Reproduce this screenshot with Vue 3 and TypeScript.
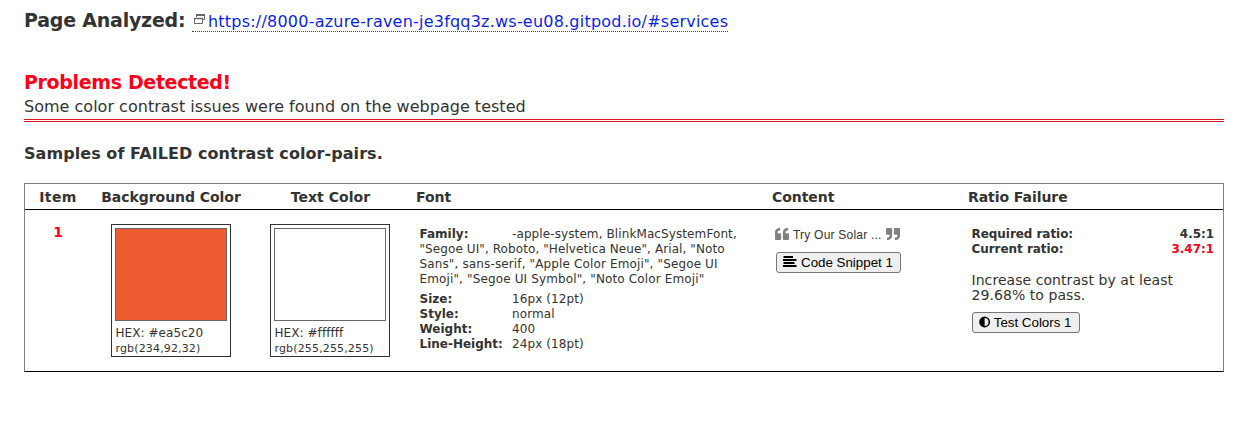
<script setup lang="ts">
interface Swatch { label: string; hex: string; rgb: string }
const swatches: Swatch[] = [
  { label: 'Background', hex: '#ea5c20', rgb: 'rgb(234,92,32)' },
  { label: 'Text', hex: '#ffffff', rgb: 'rgb(255,255,255)' },
]
const shown: Record<string, string> = { '#ea5c20': '#ed5c30', '#ffffff': '#ffffff' }
const family: string[] = [
  '"Segoe UI", Roboto, "Helvetica Neue", Arial, "Noto',
  'Sans", sans-serif, "Apple Color Emoji", "Segoe UI',
  'Emoji", "Segoe UI Symbol", "Noto Color Emoji"',
]
const props: [string, string][] = [
  ['Size:', '16px (12pt)'],
  ['Style:', 'normal'],
  ['Weight:', '400'],
  ['Line-Height:', '24px (18pt)'],
]
</script>

<template>
  <main class="page">
    <div class="analyzed">
      <span class="label">Page Analyzed:</span>
      <a class="link">
        <svg class="win" width="12" height="11" viewBox="0 0 12 11" fill="none" stroke="#666">
          <path d="M2.5 3V.5h8v5H9" /><path d="M2 1h9" stroke-width="2" />
          <path d="M.5 4.5h8v5h-8z" /><path d="M0 4.500h9" stroke-width="1.500" />
        </svg><span class="url">https://8000-azure-raven-je3fqq3z.ws-eu08.gitpod.io/#services</span>
      </a>
    </div>
    <h1>Problems Detected!</h1>
    <p class="sub">Some color contrast issues were found on the webpage tested</p>
    <h2>Samples of FAILED contrast color-pairs.</h2>
    <section class="table">
      <div class="row head">
        <div class="c1">Item</div>
        <div class="c2">Background Color</div>
        <div class="c3">Text Color</div>
        <div class="c4">Font</div>
        <div class="c5">Content</div>
        <div class="c6">Ratio Failure</div>
      </div>
      <div class="row body">
        <div class="c1 num">1</div>
        <div v-for="(s, i) in swatches" :key="s.hex" :class="i ? 'c3' : 'c2'">
          <div class="swatch">
            <div class="fill" :style="{ background: shown[s.hex] }"></div>
            <div class="hex">HEX: {{ s.hex }}</div>
            <div class="rgb">{{ s.rgb }}</div>
          </div>
        </div>
        <div class="c4 font">
          <div class="prop"><b>Family:</b><span>-apple-system, BlinkMacSystemFont,</span></div>
          <div v-for="(line, i) in family" :key="i" :class="'fam f' + i">{{ line }}</div>
          <div class="props">
            <div v-for="p in props" :key="p[0]" class="prop"><b>{{ p[0] }}</b><span>{{ p[1] }}</span></div>
          </div>
        </div>
        <div class="c5 content">
          <div class="quote">
            <svg width="14" height="12" viewBox="0 0 512 448" preserveAspectRatio="none"><path fill="#808080" d="M464 192h-80v-32c0-35 29-64 64-64h8c13 0 24-11 24-24V24c0-13-11-24-24-24h-8C360 0 288 72 288 160v240c0 27 21 48 48 48h128c27 0 48-21 48-48V240c0-27-21-48-48-48zm-288 0H96v-32c0-35 29-64 64-64h8c13 0 24-11 24-24V24c0-13-11-24-24-24h-8C72 0 0 72 0 160v240c0 27 21 48 48 48h128c27 0 48-21 48-48V240c0-27-21-48-48-48z" /></svg>
            <span>Try Our Solar ...</span>
            <svg class="close" width="14" height="12" viewBox="0 0 512 448" preserveAspectRatio="none"><path fill="#808080" d="M464 192h-80v-32c0-35 29-64 64-64h8c13 0 24-11 24-24V24c0-13-11-24-24-24h-8C360 0 288 72 288 160v240c0 27 21 48 48 48h128c27 0 48-21 48-48V240c0-27-21-48-48-48zm-288 0H96v-32c0-35 29-64 64-64h8c13 0 24-11 24-24V24c0-13-11-24-24-24h-8C72 0 0 72 0 160v240c0 27 21 48 48 48h128c27 0 48-21 48-48V240c0-27-21-48-48-48z" /></svg>
          </div>
          <button class="snippet">
            <svg width="14" height="11" viewBox="0 0 14 11"><path d="M.5 0h9.500v2H.5zM0 3h13.500v2H0zM.5 6h11v2H.5zM0 9h13.500v2H0z" /></svg>
            <span>Code Snippet 1</span>
          </button>
        </div>
        <div class="c6 ratio">
          <div class="pair"><span>Required ratio:</span><span>4.5:1</span></div>
          <div class="pair"><span>Current ratio:</span><span class="red">3.47:1</span></div>
          <div class="advice"><div>Increase contrast by at least</div><div>29.68% to pass.</div></div>
          <button class="test">
            <svg width="12" height="12" viewBox="0 0 12 12"><circle cx="6" cy="6" r="5" fill="none" stroke="#000" stroke-width="1.7" /><path d="M6 1a5 5 0 0 0 0 10z" /></svg>
            <span>Test Colors 1</span>
          </button>
        </div>
      </div>
    </section>
  </main>
</template>

<style>
body { margin: 0; background: #fff; }
</style>
<style scoped>
.page { box-sizing: border-box; width: 1235px; height: 430px; padding: 9px 11px 0 24px; overflow: hidden; font-family: Verdana, "DejaVu Sans", sans-serif; color: #333; white-space: nowrap; }
.analyzed { display: flex; height: 24px; }
.label { width: 168px; font: bold 19px/23px Verdana, "DejaVu Sans", sans-serif; letter-spacing: -.22px; }
.link { display: flex; box-sizing: border-box; width: 536px; height: 23px; color: #0b1fe8; border-bottom: 1px dotted #3335b5; font-size: 16px; line-height: 25px; letter-spacing: .215px; }
.win { margin: 5px 2px 0 2px; flex: none; }
h1 { margin: 38px 0 0; font-size: 19px; line-height: 23px; color: #ff0019; letter-spacing: -.35px; }
.sub { margin: 2px 0 0; height: 23px; line-height: 22px; font-size: 16px; letter-spacing: .015px; border-bottom: 3px double #e0142a; }
h2 { margin: 22px 0 0; font-size: 16px; line-height: 20px; letter-spacing: .06px; }
.table { box-sizing: border-box; width: 1200px; height: 189px; margin-top: 18.500px; border: 1px solid #808080; border-bottom-color: #000; }
.row { display: grid; grid-template-columns: 66px 160px 159px 356px 196px 1fr; }
.head { height: 25px; border-bottom: 1px solid #000; font-weight: bold; font-size: 14px; line-height: 26px; }
.head .c1, .head .c2, .head .c3 { text-align: center; }
.head .c2 { letter-spacing: -.05px; }
.head .c1 { letter-spacing: .4px; }
.head .c3 { letter-spacing: .05px; }
.head .c4, .head .c5, .head .c6 { padding-left: 6px; }
.head .c5, .head .c6 { letter-spacing: -.06px; }
.num { padding-top: 14px; text-align: center; color: #ff0019; font-size: 14px; line-height: 16px; font-weight: bold; }
.swatch { box-sizing: border-box; width: 120px; height: 133px; margin: 14px 0 0 20px; padding: 3px; border: 1px solid #333; font-size: 12px; }
.c3 .swatch { margin-left: 19px; }
.fill { box-sizing: border-box; width: 112px; height: 93px; border: 1px solid #666; }
.hex { margin-top: 4px; line-height: 16px; padding-left: .5px; letter-spacing: .06px; }
.rgb { font-size: 11px; line-height: 16px; padding-left: .5px; letter-spacing: .15px; }
.font { padding: 17px 0 0 9.500px; font-size: 12px; line-height: 15px; letter-spacing: .09px; }
.f1, .f2 { letter-spacing: .135px; }
.prop { display: flex; height: 15px; }
.prop b { width: 92.500px; letter-spacing: 0; }
.prop span { letter-spacing: .1px; }
.props { margin-top: 5px; }
.content { padding: 16px 0 0 10px; }
.quote { display: flex; height: 18px; align-items: flex-start; font: 12px/19px "Liberation Sans", Arial, sans-serif; }
.quote span { width: 93px; padding-left: 4px; box-sizing: border-box; letter-spacing: .22px; }
.quote span + svg { margin-left: 4px; }
.quote svg { flex: none; margin-left: -1px; margin-top: 2px; }
.quote .close { margin-left: 4px; transform: rotate(180deg); }
button { display: flex; align-items: center; box-sizing: border-box; height: 21px; padding: 0 7px; border: 1px solid #767676; border-radius: 3px; background: #efefef; color: #000; font: 13.333px "Liberation Sans", Arial, sans-serif; }
.snippet { width: 125px; margin-top: 8px; padding-left: 6px; gap: 4px; }
.snippet svg { margin-top: -1px; }
.test { width: 108px; margin-top: 9px; padding-left: 6.500px; gap: 3.500px; }
.ratio { padding: 17px 9px 0 9.500px; }
.pair { display: flex; justify-content: space-between; font-size: 12px; line-height: 15px; font-weight: bold; letter-spacing: -.05px; }
.red { color: #ff0019; }
.advice { margin-top: 16px; font-size: 14px; line-height: 15px; letter-spacing: .06px; }
</style>
